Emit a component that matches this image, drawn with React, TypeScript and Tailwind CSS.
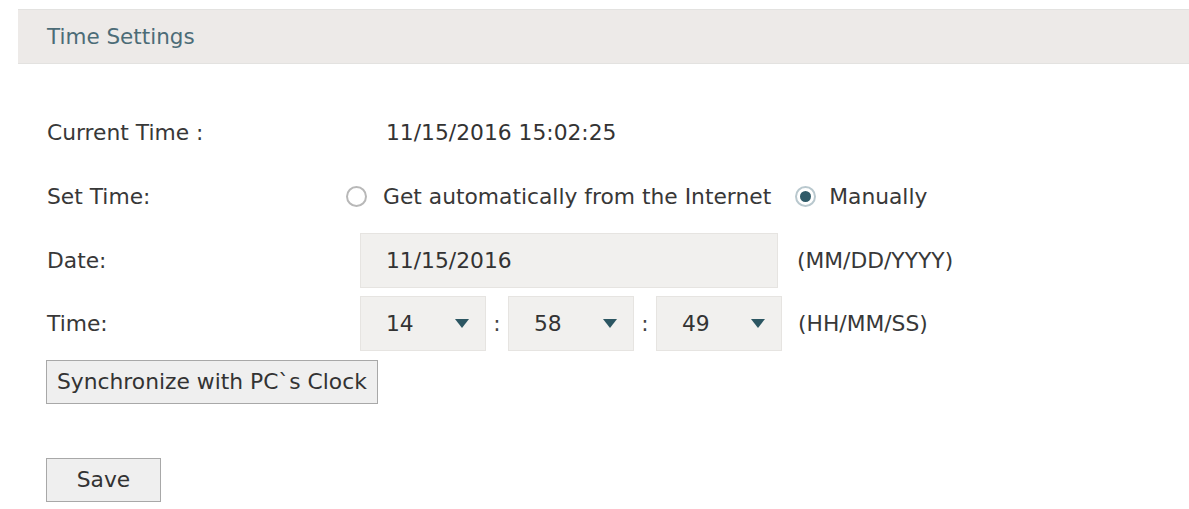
import type { ReactNode } from 'react';

const font = { fontFamily: '"DejaVu Sans", Verdana, sans-serif' };

function Radio({ checked }: { checked?: boolean }) {
  return (
    <span
      className={
        checked
          ? 'flex h-[21px] w-[21px] items-center justify-center rounded-full border-[2px] border-[#b9c8ce] bg-white'
          : 'h-[21px] w-[21px] rounded-full border-[2px] border-[#b8b8b8] bg-white'
      }
    >
      {checked && <span className="h-[11px] w-[11px] rounded-full bg-[#2f5a68]" />}
    </span>
  );
}

function Row({ label, className, children }: { label: string; className: string; children: ReactNode }) {
  return (
    <div className={`flex items-center ${className}`}>
      <div className="w-[313px] shrink-0">{label}</div>
      {children}
    </div>
  );
}

function TimeSelect({ value }: { value: string }) {
  return (
    <div className="flex h-[55px] w-[126px] items-center justify-between border border-[#e6e4e1] bg-[#f1f0ee] pl-[25px] pr-[16px] text-[#333]">
      <span>{value}</span>
      <svg width="14" height="9" viewBox="0 0 14 9">
        <path d="M0 0h14L7 9z" fill="#2c5662" />
      </svg>
    </div>
  );
}

function Colon() {
  return <span className="flex w-[22px] justify-center text-[#444]">:</span>;
}

export default function App() {
  return (
    <div className="min-h-screen bg-white pt-[9px] text-[21.8px] leading-none text-[#383838]" style={font}>
      <div className="ml-[18px] flex h-[55px] items-center border-t border-b border-[#e3e2e0] bg-[#edeae8] pl-[29px] text-[21.5px] text-[#4c6c77]">
        Time Settings
      </div>

      <div className="pl-[47px]">
        <Row label="Current Time :" className="mt-[47px] h-[44px]">
          <span className="ml-[26px] text-[#333]">11/15/2016 15:02:25</span>
        </Row>

        <Row label="Set Time:" className="mt-[20px] h-[44px]">
          <label className="-ml-[14px] flex items-center gap-[16px]">
            <Radio />
            Get automatically from the Internet
          </label>
          <label className="ml-[24px] flex items-center gap-[13px]">
            <Radio checked />
            Manually
          </label>
        </Row>

        <Row label="Date:" className="mt-[14px] h-[55px]">
          <div className="flex h-[55px] w-[418px] items-center border border-[#e6e4e1] bg-[#f1f0ee] pl-[25px] text-[#333]">
            11/15/2016
          </div>
          <span className="ml-[19px]">(MM/DD/YYYY)</span>
        </Row>

        <Row label="Time:" className="mt-[8px] h-[55px]">
          <TimeSelect value="14" />
          <Colon />
          <TimeSelect value="58" />
          <Colon />
          <TimeSelect value="49" />
          <span className="ml-[16px]">(HH/MM/SS)</span>
        </Row>

        <button className="-ml-px mt-[9px] flex h-[44px] items-center border border-[#a8a8a8] bg-[#efefef] px-[10px] text-[#333]">
          Synchronize with PC`s Clock
        </button>

        <button className="-ml-px mt-[54px] flex h-[44px] w-[115px] items-center justify-center border border-[#a8a8a8] bg-[#efefef] text-[#333]">
          Save
        </button>
      </div>
    </div>
  );
}
